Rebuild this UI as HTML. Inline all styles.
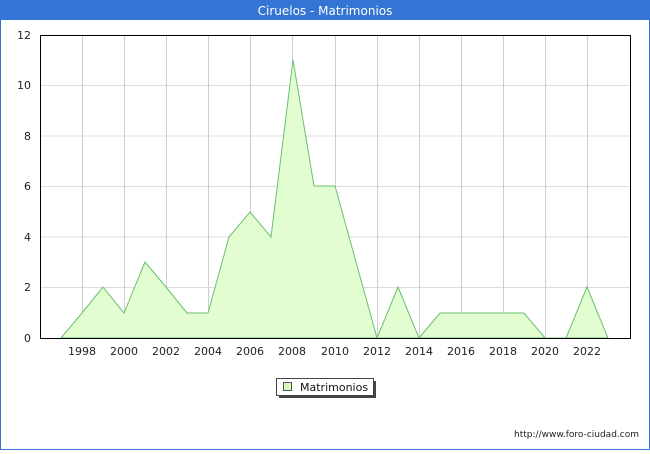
<!DOCTYPE html>
<html><head><style>
body{margin:0;width:650px;height:450px;overflow:hidden;background:#fff;font-family:"DejaVu Sans","Liberation Sans",sans-serif}
</style></head><body>
<svg width="650" height="450" xmlns="http://www.w3.org/2000/svg" font-family="DejaVu Sans, Liberation Sans, sans-serif">
<rect x="0.5" y="0.5" width="649" height="449" fill="#fff" stroke="#3374d5"/>
<rect x="0" y="0" width="650" height="20" fill="#3374d5"/>
<text x="325" y="15" fill="#fff" font-size="12" text-anchor="middle">Ciruelos - Matrimonios</text>
<g stroke="#dcdcdc" stroke-width="1">
<line x1="41" y1="287.5" x2="630" y2="287.5"/><line x1="41" y1="237" x2="630" y2="237"/><line x1="41" y1="186.5" x2="630" y2="186.5"/><line x1="41" y1="136" x2="630" y2="136"/><line x1="41" y1="85.5" x2="630" y2="85.5"/>
</g>
<g stroke="#cfcfcf">
<line x1="82.5" y1="35" x2="82.5" y2="338"/><line x1="124.5" y1="35" x2="124.5" y2="338"/><line x1="166.5" y1="35" x2="166.5" y2="338"/><line x1="208.5" y1="35" x2="208.5" y2="338"/><line x1="250.5" y1="35" x2="250.5" y2="338"/><line x1="292.5" y1="35" x2="292.5" y2="338"/><line x1="335.5" y1="35" x2="335.5" y2="338"/><line x1="377.5" y1="35" x2="377.5" y2="338"/><line x1="419.5" y1="35" x2="419.5" y2="338"/><line x1="461.5" y1="35" x2="461.5" y2="338"/><line x1="503.5" y1="35" x2="503.5" y2="338"/><line x1="545.5" y1="35" x2="545.5" y2="338"/><line x1="587.5" y1="35" x2="587.5" y2="338"/>
</g>
<polygon fill="#e2fdd0" stroke="#6cbf74" stroke-width="1" points="61,338 82,313 103,287 124,313 145,262 166,287 187,313 208,313 229,237 250,212 271,237 293,60 314,186 335,186 356,262 377,338 398,287 419,338 440,313 461,313 482,313 503,313 524,313 545,338 566,338 587,287 608,338"/>
<rect x="40.5" y="35.5" width="590" height="303" fill="none" stroke="#000"/>
<g font-size="11" fill="#222" text-anchor="end">
<text x="31" y="342">0</text><text x="31" y="291">2</text><text x="31" y="241">4</text><text x="31" y="190">6</text><text x="31" y="140">8</text><text x="31" y="89">10</text><text x="31" y="39">12</text>
</g>
<g font-size="11" fill="#222" text-anchor="middle">
<text x="82" y="355">1998</text><text x="124" y="355">2000</text><text x="166" y="355">2002</text><text x="208" y="355">2004</text><text x="250" y="355">2006</text><text x="292" y="355">2008</text><text x="335" y="355">2010</text><text x="377" y="355">2012</text><text x="419" y="355">2014</text><text x="461" y="355">2016</text><text x="503" y="355">2018</text><text x="545" y="355">2020</text><text x="587" y="355">2022</text>
</g>
<rect x="279" y="381" width="97" height="17" fill="#444"/>
<rect x="276.5" y="378.5" width="97" height="17" fill="#fff" stroke="#444"/>
<rect x="283.5" y="382.5" width="8" height="8" fill="#d8f8b8" stroke="#555"/>
<text x="300" y="391" font-size="11" fill="#111">Matrimonios</text>
<text x="639" y="437" font-size="9" fill="#222" text-anchor="end">http://www.foro-ciudad.com</text>
</svg>
</body></html>
